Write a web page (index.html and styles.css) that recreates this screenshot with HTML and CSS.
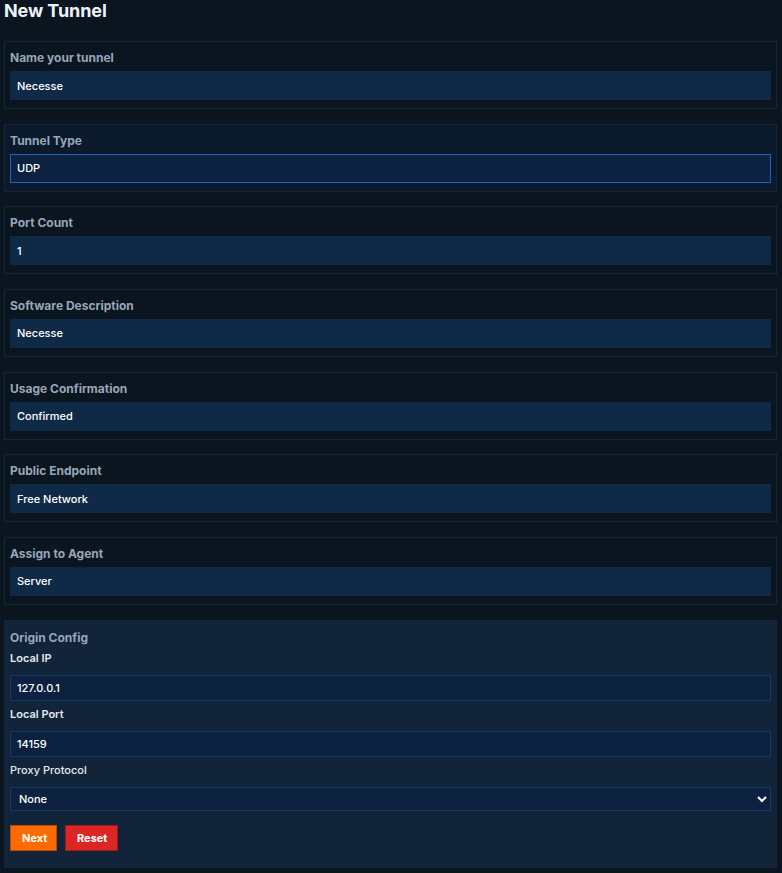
FILE: index.html
```html
<!DOCTYPE html>
<html lang="en">
<head>
<meta charset="utf-8">
<title>New Tunnel</title>
<link rel="stylesheet" href="styles.css">
</head>
<body>
<h1 class="title">New Tunnel</h1>
<div class="form">
  <div class="card">
    <label class="card-label">Name your tunnel</label>
    <input class="field" type="text" value="Necesse">
  </div>
  <div class="card card-active">
    <label class="card-label">Tunnel Type</label>
    <input class="field field-focus" type="text" value="UDP">
  </div>
  <div class="card">
    <label class="card-label">Port Count</label>
    <input class="field" type="text" value="1">
  </div>
  <div class="card">
    <label class="card-label">Software Description</label>
    <input class="field" type="text" value="Necesse">
  </div>
  <div class="card">
    <label class="card-label">Usage Confirmation</label>
    <input class="field" type="text" value="Confirmed">
  </div>
  <div class="card">
    <label class="card-label">Public Endpoint</label>
    <input class="field" type="text" value="Free Network">
  </div>
  <div class="card">
    <label class="card-label">Assign to Agent</label>
    <input class="field" type="text" value="Server">
  </div>
  <div class="origin">
    <div class="origin-title">Origin Config</div>
    <label class="sub-label">Local IP</label>
    <input class="sub-field" type="text" value="127.0.0.1">
    <label class="sub-label">Local Port</label>
    <input class="sub-field" type="text" value="14159">
    <label class="sub-label sub-label-light">Proxy Protocol</label>
    <select class="sub-select">
      <option>None</option>
      <option>v1</option>
      <option>v2</option>
    </select>
    <div class="actions">
      <button class="btn btn-next" type="button">Next</button>
      <button class="btn btn-reset" type="button">Reset</button>
    </div>
  </div>
</div>
</body>
</html>
```
FILE: styles.css
```css
* { box-sizing: border-box; }
html, body { margin: 0; }
body {
  background: #0a1520;
  padding: 0 5px 4px 4px;
  font-family: Inter, "Liberation Sans", Arial, sans-serif;
  color: #e5ebf2;
}
.title {
  margin: 0 0 19px 0;
  font-size: 18px;
  line-height: 22px;
  font-weight: 700;
  color: #eef2f7;
  letter-spacing: -0.1px;
}
.form {
  display: flex;
  flex-direction: column;
  gap: 14.67px;
}
.card {
  border: 1px solid #132737;
  background: #0a1520;
  padding: 6px 5px 8px 5px;
  display: flex;
  flex-direction: column;
}
.card-active { background: #0a192c; }
.card-label {
  display: block;
  margin: 3px 0 6px 0;
  font-size: 12px;
  line-height: 14px;
  font-weight: 700;
  color: #97a6b8;
}
.field {
  display: block;
  width: 100%;
  height: 29px;
  margin: 0;
  padding: 0 6px;
  border: 1px solid #0f2a47;
  background: #0f2a47;
  color: #ffffff;
  font-family: Inter, "Liberation Sans", Arial, sans-serif;
  font-size: 11px;
  font-weight: 500;
  outline: none;
  border-radius: 0;
}
.field-focus {
  background: #0c2240;
  border-color: #1e64b5;
}
.origin {
  background: #12243a;
  padding: 11px 6px 17px 6px;
  display: flex;
  flex-direction: column;
}
.origin-title {
  font-size: 12px;
  line-height: 14px;
  font-weight: 700;
  color: #97a6b8;
  margin-bottom: 6px;
}
.sub-label {
  display: block;
  font-size: 11px;
  line-height: 14px;
  font-weight: 600;
  color: #e3e8ef;
  margin-bottom: 10px;
}
.sub-label-light { font-weight: 500; }
.sub-field {
  display: block;
  width: 100%;
  height: 26px;
  margin: 0 0 6px 0;
  padding: 0 6px;
  border: 1px solid #173a63;
  background: #0c2140;
  color: #ffffff;
  font-family: Inter, "Liberation Sans", Arial, sans-serif;
  font-size: 11px;
  font-weight: 500;
  outline: none;
  border-radius: 0;
}
.sub-select {
  display: block;
  width: 100%;
  height: 24px;
  margin: 0;
  padding: 0 4px;
  border: 1px solid #173a63;
  background: #0c2140;
  color: #ffffff;
  color-scheme: dark;
  font-family: Inter, "Liberation Sans", Arial, sans-serif;
  font-size: 11px;
  font-weight: 500;
  border-radius: 0;
  outline: none;
}
.actions {
  display: flex;
  gap: 8px;
  margin-top: 14px;
}
.btn {
  height: 26px;
  margin: 0;
  padding: 0 11px;
  font-family: Inter, "Liberation Sans", Arial, sans-serif;
  font-size: 11px;
  font-weight: 700;
  color: #ffffff;
  border-radius: 0;
  cursor: pointer;
}
.btn-next {
  background: #ff6a00;
  border: 1px solid #b64b08;
  width: 47px;
}
.btn-reset {
  background: #dc2626;
  border: 1px solid #9b1c1c;
  width: 53px;
}
```
